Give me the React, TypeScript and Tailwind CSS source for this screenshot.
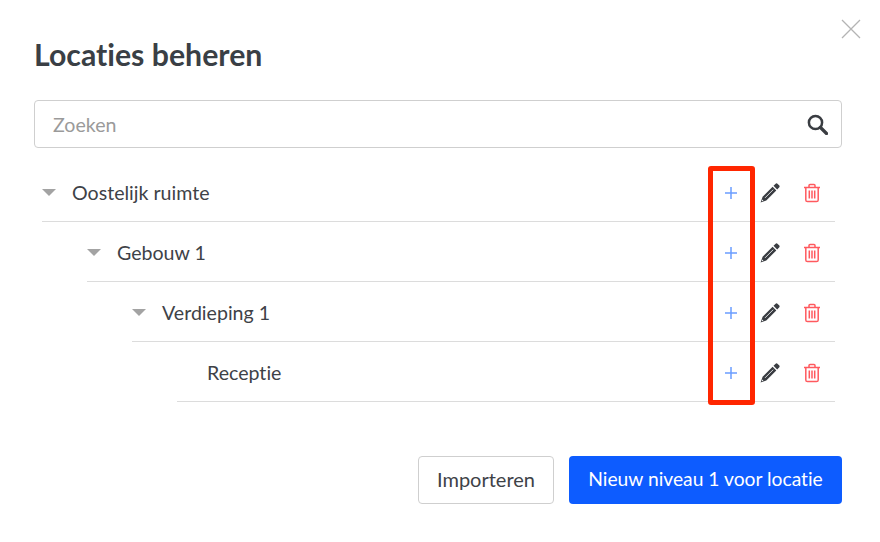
import React from "react";

type Row = {
    label: string;
    depth: number;
    hasChildren: boolean;
};

const rows: Row[] = [
    { label: "Oostelijk ruimte", depth: 0, hasChildren: true },
    { label: "Gebouw 1", depth: 1, hasChildren: true },
    { label: "Verdieping 1", depth: 2, hasChildren: true },
    { label: "Receptie", depth: 3, hasChildren: false },
];

const indent = ["ml-0", "ml-[45px]", "ml-[90px]", "ml-[135px]"];

const PlusIcon = () => (
    <svg width="12" height="12" viewBox="0 0 12 12" className="text-[#6b9dff]">
        <path d="M6 0v12M0 6h12" stroke="currentColor" strokeWidth="1.5" fill="none" />
    </svg>
);

const PencilIcon = () => (
    <svg width="20" height="20" viewBox="0 0 20 20" className="text-[#3a3d42]">
        <path
            fill="currentColor"
            d="M15.4.9a1.7 1.7 0 0 1 2.3 0l1.4 1.4a1.7 1.7 0 0 1 0 2.3l-1.9 1.9-3.7-3.7zM12.6 3.7l3.7 3.7L6.3 17.4 0.6 19.4l2-5.7z"
        />
        <path d="M5 14.9l8.2-8.2" stroke="white" strokeWidth="0.8" fill="none" />
        <path d="M1.7 18.3l1.7-.6-1.1-1.1z" fill="white" />
    </svg>
);

const TrashIcon = () => (
    <svg width="18" height="20" viewBox="0 0 18 20" fill="none" stroke="currentColor" strokeWidth="1.5" className="text-[#ff5a5f]">
        <path d="M1 4.5h16M6 4.5V2.6c0-.6.4-1 1-1h4c.6 0 1 .4 1 1v1.9" />
        <path d="M2.8 4.5v12.4c0 1 .7 1.7 1.7 1.7h9c1 0 1.7-.7 1.7-1.7V4.5" />
        <path d="M6.3 7.5v8M9 7.5v8M11.7 7.5v8" />
    </svg>
);

const App: React.FC = () => {
    return (
        <div className="relative w-[880px] h-[542px] bg-white overflow-hidden pl-[34px] pr-[38px] text-[#3a3d42] font-['Lato',sans-serif] [font-variant-ligatures:none]">
            <button className="absolute top-[19px] right-[19px] text-[#b4b4b4]">
                <svg width="20" height="20" viewBox="0 0 20 20" className="block">
                    <path d="M1 1l18 18M19 1L1 19" stroke="currentColor" strokeWidth="1.3" fill="none" />
                </svg>
            </button>

            <h1 className="pt-[35px] text-[30.25px] leading-[38px] font-bold text-[#3a3f45]">Locaties beheren</h1>

            <div className="mt-[27px] h-[48px] flex items-center justify-between rounded border border-[#cfcfcf] pl-[18px] pr-[13px]">
                <span className="pt-[2px] text-[19.6px] text-[#9a9a9a]">Zoeken</span>
                <svg width="21" height="21" viewBox="0 0 21 21" fill="none" stroke="currentColor" className="text-[#3a3d42]">
                    <circle cx="8.5" cy="8.5" r="6.6" strokeWidth="2.5" />
                    <path d="M13.5 13.5l6 6" strokeWidth="3.2" strokeLinecap="round" />
                </svg>
            </div>

            <div className="mt-[14px] ml-[8px] mr-[7px]">
                {rows.map((row) => (
                    <div key={row.label} className={`${indent[row.depth]} h-[60px] pt-[2px] flex items-center border-b border-[#dcdcdc]`}>
                        <div className="w-[30px] shrink-0">
                            {row.hasChildren && (
                                <div className="w-0 h-0 border-x-[7.5px] border-x-transparent border-t-[7px] border-t-[#a3a3a3]" />
                            )}
                        </div>
                        <span className="text-[19.6px] text-[#3e4247]">{row.label}</span>
                        <div className="ml-auto flex items-center">
                            <div className="w-[12px] flex justify-center"><PlusIcon /></div>
                            <div className="w-[20px] ml-[23px]"><PencilIcon /></div>
                            <div className="w-[18px] ml-[23px] mr-[14px]"><TrashIcon /></div>
                        </div>
                    </div>
                ))}
            </div>

            <div className="absolute left-[708px] top-[166px] w-[47px] h-[239px] rounded-[3px] border-[5px] border-[#ff2600]" />

            <div className="mt-[54px] flex justify-end gap-[15px]">
                <button className="h-[48px] w-[136px] pb-[2px] rounded border border-[#cfcfcf] bg-white text-[20px] text-[#3e4247]">
                    Importeren
                </button>
                <button className="h-[48px] w-[273px] pb-[2px] rounded bg-[#0d5cff] text-[19.25px] text-white">
                    Nieuw niveau 1 voor locatie
                </button>
            </div>
        </div>
    );
};

export default App;
